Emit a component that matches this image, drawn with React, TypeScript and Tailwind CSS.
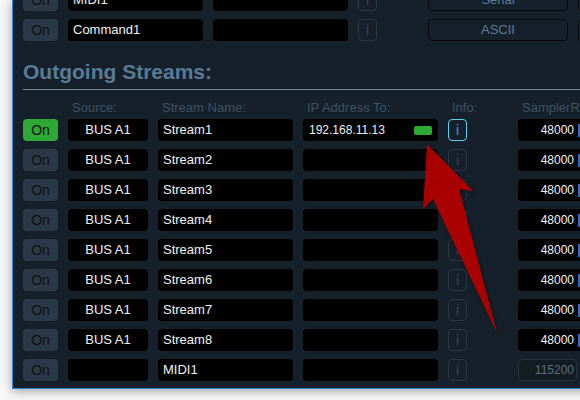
const font = { fontFamily: '"Liberation Sans", Arial, sans-serif' };

type Row = { source: string; name: string; ip?: string; active?: boolean; rate: string; midi?: boolean };

const rows: Row[] = [
  { source: "BUS A1", name: "Stream1", ip: "192.168.11.13", active: true, rate: "48000" },
  { source: "BUS A1", name: "Stream2", rate: "48000" },
  { source: "BUS A1", name: "Stream3", rate: "48000" },
  { source: "BUS A1", name: "Stream4", rate: "48000" },
  { source: "BUS A1", name: "Stream5", rate: "48000" },
  { source: "BUS A1", name: "Stream6", rate: "48000" },
  { source: "BUS A1", name: "Stream7", rate: "48000" },
  { source: "BUS A1", name: "Stream8", rate: "48000" },
  { source: "", name: "MIDI1", rate: "115200", midi: true },
];

function OnButton({ active }: { active?: boolean }) {
  return (
    <div
      className={
        "w-[35px] h-[22px] shrink-0 rounded-[4px] flex items-center justify-center text-[14px] text-[#111] " +
        (active ? "bg-[#2ea836]" : "bg-[#2a3847]")
      }
    >
      On
    </div>
  );
}

function Info({ active }: { active?: boolean }) {
  return (
    <div
      className={
        "w-[19px] h-[22px] shrink-0 rounded-[4px] border flex items-center justify-center text-[14px] " +
        (active ? "border-[#5ccfee] text-[#3b9ce8]" : "border-[#2b3641] text-[#37434f]")
      }
    >
      i
    </div>
  );
}

function Field({ w, children, className = "" }: { w: string; children?: React.ReactNode; className?: string }) {
  return (
    <div className={w + " h-[22px] shrink-0 rounded-[4px] bg-black text-[13px] text-[#f2f2f2] flex items-center " + className}>
      {children}
    </div>
  );
}

function TopRow({ name, mode }: { name: string; mode: string }) {
  return (
    <div className="flex gap-[10px] h-[22px]">
      <OnButton />
      <Field w="w-[135px]" className="pl-[5px]">{name}</Field>
      <Field w="w-[135px]" />
      <Info />
      <div className="ml-[41px] w-[140px] h-[22px] shrink-0 rounded-[4px] border border-[#070b0f] flex items-center justify-center text-[13px] text-[#5e7d97]">
        {mode}
      </div>
      <div className="w-[140px] h-[22px] shrink-0 rounded-[4px] border border-[#070b0f]" />
    </div>
  );
}

export default function App() {
  return (
    <div className="relative w-[580px] h-[400px] overflow-hidden bg-[#f7f7f7]" style={font}>
      <div className="ml-[12px] w-[640px] h-[389px] bg-[#16202a] border-l border-b border-[#2f86d6] shadow-[0_2px_10px_rgba(0,0,0,0.35)] overflow-hidden">
        <div className="pl-[10px] -mt-[11px] flex flex-col">
          <div className="flex flex-col gap-[8px]">
            <TopRow name="MIDI1" mode="Serial" />
            <TopRow name="Command1" mode="ASCII" />
          </div>
          <div className="mt-[19px] h-[24px] leading-[24px] text-[21px] font-bold text-[#5a7b97]">Outgoing Streams:</div>
          <div className="mt-[5px] h-px bg-[#73879a]" />
          <div className="mt-[10px] flex gap-[10px] h-[16px] leading-[16px] text-[13px] text-[#3d5264]">
            <div className="w-[35px] shrink-0" />
            <div className="w-[80px] shrink-0 pl-[4px]">Source:</div>
            <div className="w-[135px] shrink-0 pl-[4px]">Stream Name:</div>
            <div className="w-[135px] shrink-0 pl-[4px]">IP Address To:</div>
            <div className="w-[19px] shrink-0 pl-[4px]">Info:</div>
            <div className="ml-[41px] w-[100px] shrink-0 pl-[4px] whitespace-nowrap">SamplerRate:</div>
          </div>
          <div className="mt-[3px] flex flex-col gap-[8px]">
            {rows.map((r) => (
              <div key={r.name} className="flex gap-[10px] h-[22px]">
                <OnButton active={r.active} />
                <Field w="w-[80px]" className="justify-center">{r.source}</Field>
                <Field w="w-[135px]" className="pl-[5px]">{r.name}</Field>
                <Field w="w-[135px]" className="pl-[6px] pr-[6px] justify-between">
                  {r.ip && <span className="text-[12px]">{r.ip}</span>}
                  {r.ip && <span className="w-[18px] h-[9px] rounded-[2px] bg-[#2aa935]" />}
                </Field>
                <Info active={r.active} />
                {r.midi ? (
                  <div className="ml-[41px] w-[59px] h-[22px] shrink-0 rounded-[4px] border border-[#26313b] bg-[#131b23] flex items-center justify-end pr-[2px] text-[12px] text-[#5b6f81]">
                    {r.rate}
                  </div>
                ) : (
                  <div className="ml-[41px] w-[80px] h-[22px] shrink-0 rounded-[4px] bg-black flex items-center">
                    <span className="w-[56px] text-right text-[12px] text-[#f2f2f2]">{r.rate}</span>
                    <span className="ml-[4px] w-[8px] h-[13px] bg-[#1e6fd0]" />
                  </div>
                )}
              </div>
            ))}
          </div>
        </div>
      </div>
      <svg className="absolute left-0 top-0" width="580" height="400" viewBox="0 0 580 400">
        <polygon
          points="427,144 473,191 459,189 497,333 433,199 423,209"
          fill="#b50000"
          fillOpacity="0.93"
          style={{ filter: "drop-shadow(1px 2px 2px rgba(0,0,0,0.4))" }}
        />
      </svg>
    </div>
  );
}
